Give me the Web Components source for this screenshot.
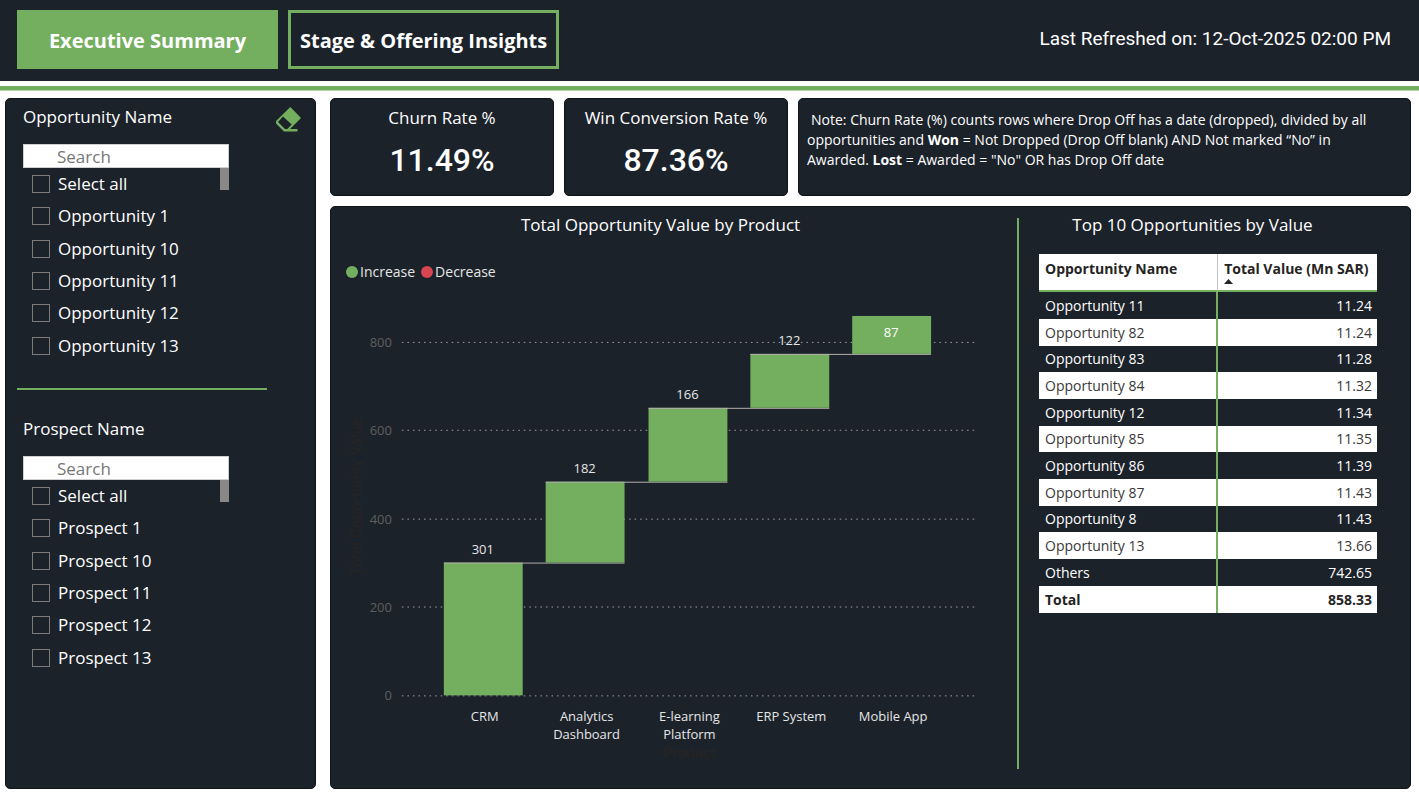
<!DOCTYPE html>
<html lang="en">
<head>
<meta charset="utf-8">
<meta name="viewport" content="width=device-width, initial-scale=1">
<title>Executive Summary</title>
<style>
  :root {
    --ink: #1c222a;
    --edge: #101318;
    --green: #74ae5f;
    --red: #d64550;
    --ui: "Open Sans", "Noto Sans", sans-serif;
    --din: Roboto, "Liberation Sans", sans-serif;
  }
  body { margin: 0; background: #fff; color: #fff; font-family: var(--ui); }
</style>
</head>
<body>
<sales-report></sales-report>

<script>
const define = (name, html, setup) => {
  const template = document.createElement('template');
  template.innerHTML = html;
  customElements.define(name, class extends HTMLElement {
    constructor() {
      super();
      this.attachShadow({ mode: 'open' }).append(template.content.cloneNode(true));
    }
    connectedCallback() {
      if (setup && !this.ready) { this.ready = true; setup(this, this.shadowRoot); }
    }
  });
};

define('report-header', `
<style>
  :host { display: block; }
  header { display: flex; align-items: flex-start; justify-content: space-between; gap: 16px;
    min-height: 81px; box-sizing: border-box; padding: 10px 28px 12px 17px; background: var(--ink); }
  nav { display: flex; gap: 10px; }
  .rule { height: 4px; margin-top: 5px; background: var(--green); border-bottom: 1px solid #b4d3a8; }
  p { margin: 0; font: 400 19px/58px var(--din); }
</style>
<header><nav aria-label="Report pages"><slot></slot></nav><p><slot name="refreshed"></slot></p></header>
<div class="rule"></div>`);

define('page-tab', `
<style>
  :host { display: block; }
  button { box-sizing: border-box; height: 59px; min-width: 261px; padding: 2px 9px 0; border: 3px solid var(--green);
    background: transparent; color: #fff; font: 700 20px/24px var(--ui); white-space: nowrap; cursor: pointer; }
  :host([current]) button { background: var(--green); }
</style>
<button type="button"><slot></slot></button>`);

define('report-card', `
<style>
  :host { display: block; box-sizing: border-box; background: var(--ink); border: 1px solid var(--edge); border-radius: 5px; min-width: 0; }
</style>
<slot></slot>`);

define('kpi-value', `
<style>
  :host { display: block; text-align: center; padding: 6px 4px 0; }
  h2 { margin: 0; font: 400 17px/26px var(--ui); }
  p { margin: 9px 0 0; font: 500 32px/40px var(--din); }
</style>
<h2><slot name="label"></slot></h2><p><slot></slot></p>`);

define('filter-slicer', `
<style>
  :host { display: block; padding: 0 14px 0 17px; }
  .head { display: flex; align-items: center; justify-content: space-between; height: 36px; }
  h2 { margin: 0; font: 400 17px/24px var(--ui); }
  button { display: none; margin: 5px 0 0; padding: 0; border: 0; background: none; cursor: pointer; }
  :host([clearable]) button { display: block; }
  svg { display: block; width: 25px; height: 25px; fill: var(--green); }
  .box { max-width: 206px; margin-top: 9px; }
  input[type=search] { display: block; box-sizing: border-box; width: 100%; height: 24px; margin: 0; padding: 0 0 0 33px;
    border: 1px solid #d0d0d0; background: #fff; color: #333; font: 400 17px/22px var(--ui); border-radius: 0; appearance: none; }
  input::placeholder { color: #767676; opacity: 1; }
  .list { display: flex; justify-content: space-between; height: 194px; }
  ul { display: grid; grid-template-rows: repeat(6, 1fr); margin: 0; padding: 0 0 0 9px; list-style: none; }
  li { display: flex; align-items: center; }
  label { display: flex; align-items: center; gap: 8px; font: 400 17px/24px var(--ui); }
  input[type=checkbox] { appearance: none; box-sizing: border-box; width: 18px; height: 18px; margin: 0; border: 1px solid #7d7a78; }
  .thumb { width: 9px; height: 22px; background: #8a8886; }
</style>
<div class="head"><h2></h2>
  <button type="button" aria-label="Clear selections"><svg viewBox="0 0 25 25" fill-rule="evenodd" aria-hidden="true"><path d="M14.3 0 25 11 14 22h7.5v2.5H8L0 16.5V14ZM7 9.6 2 15l7 7h2.200l4.500-4.400Z"/></svg></button>
</div>
<div class="box">
  <input type="search" placeholder="Search">
  <div class="list"><ul></ul><span class="thumb"></span></div>
</div>`, (host, root) => {
  const title = host.getAttribute('heading');
  const noun = host.getAttribute('noun');
  root.querySelector('h2').textContent = title;
  root.querySelector('input').setAttribute('aria-label', 'Search ' + title);
  const names = ['Select all', ...[1, 10, 11, 12, 13].map(n => noun + ' ' + n)];
  root.querySelector('ul').innerHTML = names
    .map(n => `<li><label><input type="checkbox"><span>${n}</span></label></li>`).join('');
});

define('waterfall-chart', `
<style>
  :host { display: block; padding-right: 27px; }
  h2 { margin: 0; text-align: center; font: 400 17px/24px var(--ui); }
  .legend { display: flex; gap: 6px; margin: 25px 0 8px; padding: 0 0 0 15px; list-style: none; font: 400 14px/20px var(--ui); }
  .legend li { display: flex; align-items: center; gap: 2px; color: #e6e6e6; }
  .legend li::before { content: ""; width: 12px; height: 12px; border-radius: 50%; background: var(--green); }
  .legend li + li::before { background: var(--red); }
  svg { display: block; width: 100%; height: auto; overflow: visible; font-family: var(--ui); }
  .grid { stroke: #a3a3a3; stroke-width: 1; stroke-dasharray: 1.5 4.05; }
  .bar { fill: var(--green); }
  .join { stroke: #b3b0ad; stroke-width: 1; }
  .tick { fill: #605e5c; font-size: 13px; text-anchor: end; }
  .value, .name { fill: #e6e6e6; font-size: 13px; text-anchor: middle; }
  .inside { fill: #fff; }
  .axis { fill: #252423; font: 500 15px var(--din); text-anchor: middle; }
</style>
<h2>Total Opportunity Value by Product</h2>
<ul class="legend"><li>Increase</li><li>Decrease</li></ul>
<svg viewBox="0 0 660 480" role="img" aria-label="Total Opportunity Value by Product"></svg>`, (host, root) => {
  const steps = [['CRM', 301], ['Analytics|Dashboard', 182], ['E-learning|Platform', 166], ['ERP System', 122], ['Mobile App', 87]];
  const y = v => Math.round(406 - v * 0.443);
  const x = i => Math.round(113 + i * 102.3);
  let out = '';
  for (const t of [0, 200, 400, 600, 800]) {
    out += `<line class="grid" x1="71" x2="645" y1="${y(t) + .5}" y2="${y(t) + .5}"/><text class="tick" x="61" y="${y(t) + 5}">${t}</text>`;
  }
  let sum = 0;
  steps.forEach(([name, v], i) => {
    const base = y(sum), top = y(sum += v), mid = x(i) + 40;
    const inside = i === steps.length - 1;
    out += `<rect class="bar" x="${x(i)}" y="${top}" width="79" height="${base - top}"/>`;
    if (!inside) out += `<line class="join" x1="${x(i)}" x2="${x(i + 1) + 79}" y1="${top + .5}" y2="${top + .5}"/>`;
    out += `<text class="value${inside ? ' inside' : ''}" x="${mid - 1}" y="${inside ? (top + base) / 2 + 2 : top - 9}">${v}</text>`;
    name.split('|').forEach((part, n) => {
      out += `<text class="name" x="${mid + 1}" y="${432 + n * 18}">${part}</text>`;
    });
  });
  out += `<text class="axis" x="359" y="469">Product</text>`;
  out += `<text class="axis" transform="translate(30 207) rotate(-90)">Total Opportunity Value</text>`;
  root.querySelector('svg').innerHTML = out;
});

define('top-table', `
<style>
  :host { display: block; padding: 0 33px 0 20px; }
  h2 { margin: 0 0 17px; padding-right: 31px; text-align: center; font: 400 17px/24px var(--ui); }
  table { width: 100%; table-layout: fixed; border-collapse: separate; border-spacing: 0; font: 400 14px/20px var(--ui); }
  th, td { box-sizing: border-box; padding: 0 5px 0 6px; text-align: left; white-space: nowrap; }
  thead th { height: 38px; padding-top: 5px; vertical-align: top; background: #fff; color: #252423;
    border-bottom: 2px solid var(--green); font: 700 14px/20px var(--ui); }
  thead th:first-child { width: 53%; border-right: 1px solid #c8c6c4; }
  thead svg { display: block; width: 9px; height: 5px; }
  tbody tr, tfoot tr { height: 27px; }
  tbody tr:nth-child(3n) { height: 26px; }
  tbody th, tfoot th { border-right: 2px solid var(--green); font-weight: 400; }
  td { text-align: right; }
  tbody tr:nth-child(even), tfoot tr { background: #fff; color: #3a3938; }
  tfoot th, tfoot td { font-weight: 700; color: #252423; }
</style>
<h2>Top 10 Opportunities by Value</h2>
<table>
  <thead><tr><th scope="col">Opportunity Name</th><th scope="col" aria-sort="ascending">Total Value (Mn SAR)<svg viewBox="0 0 9 5" fill="#252423" aria-hidden="true"><path d="M4.500 0 9 5H0Z"/></svg></th></tr></thead>
  <tbody></tbody>
  <tfoot><tr><th scope="row">Total</th><td>858.33</td></tr></tfoot>
</table>`, (host, root) => {
  const rows = [['Opportunity 11', '11.24'], ['Opportunity 82', '11.24'], ['Opportunity 83', '11.28'], ['Opportunity 84', '11.32'],
    ['Opportunity 12', '11.34'], ['Opportunity 85', '11.35'], ['Opportunity 86', '11.39'], ['Opportunity 87', '11.43'],
    ['Opportunity 8', '11.43'], ['Opportunity 13', '13.66'], ['Others', '742.65']];
  root.querySelector('tbody').innerHTML = rows
    .map(([n, v]) => `<tr><th scope="row">${n}</th><td>${v}</td></tr>`).join('');
});

define('sales-report', `
<style>
  :host { display: block; }
  main { display: grid; grid-template-columns: 311fr 1081fr; gap: 14px; padding: 7px 8px 8px 5px; }
  .side { min-height: 691px; }
  .side hr { height: 2px; max-width: 250px; margin: 26px 48px 21px 11px; border: 0; background: var(--green); }
  .content { display: grid; grid-template-rows: 98px 1fr; gap: 10px; min-width: 0; }
  .top { display: grid; grid-template-columns: 224fr 224fr 613fr; gap: 10px; }
  .note { margin: 0; padding: 11px 8px; font: 400 14px/20px var(--ui); }
  .first { padding-left: 4px; }
  .body { display: grid; grid-template-columns: 686fr 2px 391fr; padding: 6px 0 0; }
  .line { margin: 5px 0 0; background: var(--green); }
</style>
<report-header>
  <page-tab current>Executive Summary</page-tab><page-tab>Stage &amp; Offering Insights</page-tab>
  <span slot="refreshed">Last Refreshed on: 12-Oct-2025 02:00 PM</span>
</report-header>
<main>
  <report-card class="side">
    <filter-slicer heading="Opportunity Name" noun="Opportunity" clearable></filter-slicer>
    <hr>
    <filter-slicer heading="Prospect Name" noun="Prospect"></filter-slicer>
  </report-card>
  <div class="content">
    <div class="top">
      <report-card><kpi-value><span slot="label">Churn Rate %</span>11.49%</kpi-value></report-card>
      <report-card><kpi-value><span slot="label">Win Conversion Rate %</span>87.36%</kpi-value></report-card>
      <report-card><p class="note"><span class="first">Note: Churn Rate (%) counts rows where Drop Off has a date (dropped), divided by all</span><br>opportunities and <b>Won</b> = Not Dropped (Drop Off blank) AND Not marked “No” in<br>Awarded. <b>Lost</b> = Awarded = "No" OR has Drop Off date</p></report-card>
    </div>
    <report-card>
      <div class="body"><waterfall-chart></waterfall-chart><div class="line"></div><top-table></top-table></div>
    </report-card>
  </div>
</main>`);
</script>
</body>
</html>
